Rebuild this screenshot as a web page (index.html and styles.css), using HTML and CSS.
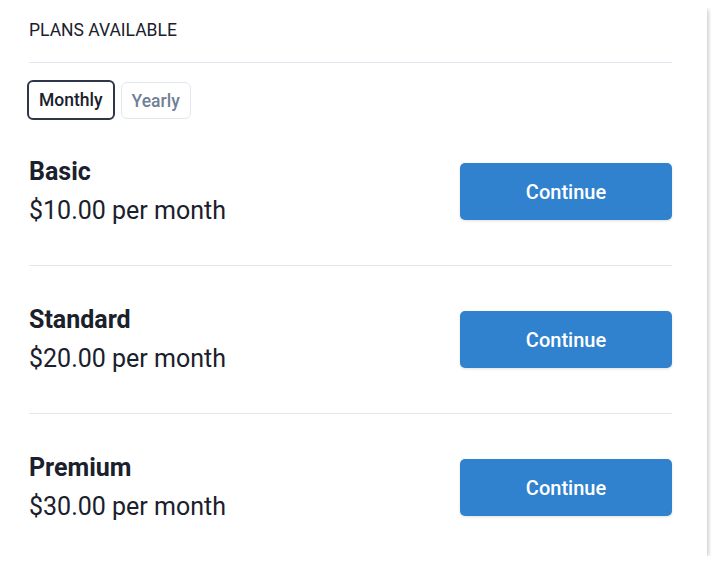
FILE: index.html
```html
<!DOCTYPE html>
<html>
<head>
<meta charset="utf-8">
<link rel="stylesheet" href="styles.css">
</head>
<body>
<div class="card">
  <div class="header">Plans available</div>
  <div class="toggle">
    <button class="tab active">Monthly</button>
    <button class="tab">Yearly</button>
  </div>
  <div class="plans">
    <div class="plan">
      <div class="info">
        <div class="name">Basic</div>
        <div class="price">$10.00 per month</div>
      </div>
      <button class="cta">Continue</button>
    </div>
    <div class="plan">
      <div class="info">
        <div class="name">Standard</div>
        <div class="price">$20.00 per month</div>
      </div>
      <button class="cta">Continue</button>
    </div>
    <div class="plan">
      <div class="info">
        <div class="name">Premium</div>
        <div class="price">$30.00 per month</div>
      </div>
      <button class="cta">Continue</button>
    </div>
  </div>
</div>
</body>
</html>
```
FILE: styles.css
```css
* { box-sizing: border-box; }
html { overflow: hidden; }
html, body { background: #fff; }
body {
  margin: 8px;
  font-family: Roboto, "Liberation Sans", sans-serif;
  color: #1a202c;
}
.card {
  width: 699px;
  height: 548px;
  padding: 0 35px 0 21px;
  background: #fff;
  box-shadow: 0 0 4px rgba(0,0,0,0.12), 1px 2px 6px rgba(0,0,0,0.18);
}
.header {
  height: 55px;
  padding-top: 12px;
  font-size: 17.5px;
  font-weight: 400;
  line-height: 20px;
  text-transform: uppercase;
  border-bottom: 1px solid #e2e8f0;
}
.toggle {
  display: flex;
  gap: 6px;
  margin-top: 17px;
  margin-left: -2px;
  align-items: flex-start;
}
.tab {
  font-family: inherit;
  font-size: 17.5px;
  font-weight: 500;
  background: #fff;
  color: #718096;
  border: 1px solid #e2e8f0;
  border-radius: 6px;
  height: 37px;
  padding: 0 10px;
  margin-top: 2px;
}
.tab.active {
  color: #1a202c;
  border: 2px solid #2d3748;
  height: 40px;
  margin-top: 0;
}
.plan {
  display: flex;
  align-items: center;
  justify-content: space-between;
  padding: 40px 0;
  border-bottom: 1px solid #e2e8f0;
}
.plan:first-child { padding-top: 38px; }
.plan:last-child { border-bottom: none; }
.info { height: 67px; }
.name {
  font-size: 25px;
  font-weight: 700;
  line-height: 28px;
}
.price {
  font-size: 25px;
  line-height: 28px;
  margin-top: 11px;
}
.cta {
  width: 212px;
  height: 57px;
  background: #3182ce;
  color: #fff;
  border: none;
  border-radius: 5px;
  font-family: inherit;
  font-size: 20px;
  font-weight: 500;
  box-shadow: 0 1px 3px rgba(0,0,0,0.12);
}
```
